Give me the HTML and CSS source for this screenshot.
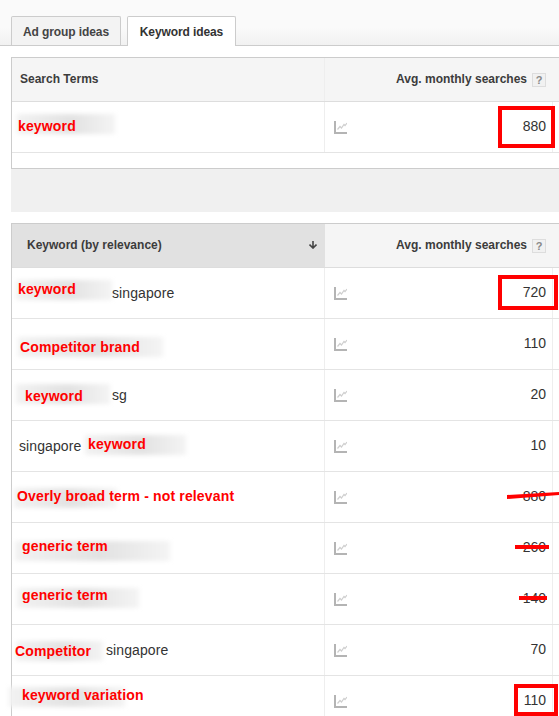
FILE: index.html
```html
<!DOCTYPE html>
<html lang="en">
<head>
    <meta charset="UTF-8">
    <title>Keyword ideas</title>
    <link rel="stylesheet" href="styles.css">
</head>
<body>
    <svg class="defs" width="0" height="0">
        <symbol id="chart" viewBox="0 0 13 13">
            <path d="M1 0V12H13" fill="none" stroke="#b4b4b4" stroke-width="2"/>
            <path d="M3.5 8.5L6 5.5L7.5 7L10 3.5L11 4.5L13 2" fill="none" stroke="#cfcfcf" stroke-width="1.2"/>
        </symbol>
    </svg>
    <div class="tabs">
        <div class="tab">Ad group ideas</div>
        <div class="tab tab-active">Keyword ideas</div>
    </div>
    <div class="panel">
        <div class="table table-terms">
            <div class="row head">
                <div class="cell-name">Search Terms</div>
                <div class="cell-searches">Avg. monthly searches <span class="help">?</span></div>
            </div>
            <div class="row">
                <div class="cell-name">
                    <span class="smudge s-term"></span>
                    <span class="note n-term">keyword</span>
                </div>
                <div class="cell-chart"><svg class="chart"><use href="#chart"/></svg></div>
                <div class="cell-num">880</div>
                <span class="box box-880"></span>
            </div>
        </div>
        <div class="spacer"></div>
        <div class="table">
            <div class="row head">
                <div class="cell-name cell-sorted">Keyword (by relevance)
                    <svg class="arrow" width="8" height="8" viewBox="0 0 8 8"><path d="M4 0V7M.5 3.5L4 7L7.5 3.5" fill="none" stroke="#444" stroke-width="1.6"/></svg>
                </div>
                <div class="cell-searches">Avg. monthly searches <span class="help">?</span></div>
            </div>
            <div class="row">
                <div class="cell-name">
                    <span class="smudge s1"></span>
                    <span class="note n1">keyword</span>
                    <span class="plain p1">singapore</span>
                </div>
                <div class="cell-chart"><svg class="chart"><use href="#chart"/></svg></div>
                <div class="cell-num">720</div>
                <span class="box box-720"></span>
            </div>
            <div class="row">
                <div class="cell-name">
                    <span class="smudge s2"></span>
                    <span class="note n2">Competitor brand</span>
                </div>
                <div class="cell-chart"><svg class="chart"><use href="#chart"/></svg></div>
                <div class="cell-num">110</div>
            </div>
            <div class="row">
                <div class="cell-name">
                    <span class="smudge s3"></span>
                    <span class="note n3">keyword</span>
                    <span class="plain p3">sg</span>
                </div>
                <div class="cell-chart"><svg class="chart"><use href="#chart"/></svg></div>
                <div class="cell-num">20</div>
            </div>
            <div class="row">
                <div class="cell-name">
                    <span class="plain p4">singapore</span>
                    <span class="smudge s4"></span>
                    <span class="note n4">keyword</span>
                </div>
                <div class="cell-chart"><svg class="chart"><use href="#chart"/></svg></div>
                <div class="cell-num">10</div>
            </div>
            <div class="row">
                <div class="cell-name">
                    <span class="smudge s5"></span>
                    <span class="note n5">Overly broad term - not relevant</span>
                </div>
                <div class="cell-chart"><svg class="chart"><use href="#chart"/></svg></div>
                <div class="cell-num">880</div>
                <svg class="strike strike-5" width="52" height="8"><polygon points="0,3 52,0 52,3 0,7" fill="#f00"/></svg>
            </div>
            <div class="row">
                <div class="cell-name">
                    <span class="smudge s6"></span>
                    <span class="note n6">generic term</span>
                </div>
                <div class="cell-chart"><svg class="chart"><use href="#chart"/></svg></div>
                <div class="cell-num">260</div>
                <span class="strike strike-6"></span>
            </div>
            <div class="row">
                <div class="cell-name">
                    <span class="smudge s7"></span>
                    <span class="note n7">generic term</span>
                </div>
                <div class="cell-chart"><svg class="chart"><use href="#chart"/></svg></div>
                <div class="cell-num">140</div>
                <span class="strike strike-7"></span>
            </div>
            <div class="row">
                <div class="cell-name">
                    <span class="smudge s8"></span>
                    <span class="note n8">Competitor</span>
                    <span class="plain p8">singapore</span>
                </div>
                <div class="cell-chart"><svg class="chart"><use href="#chart"/></svg></div>
                <div class="cell-num">70</div>
            </div>
            <div class="row">
                <div class="cell-name">
                    <span class="smudge s9"></span>
                    <span class="note n9">keyword variation</span>
                </div>
                <div class="cell-chart"><svg class="chart"><use href="#chart"/></svg></div>
                <div class="cell-num">110</div>
                <span class="box box-110"></span>
            </div>
        </div>
    </div>
</body>
</html>
```

FILE: styles.css
```css
html, body {
    height: 716px;
    overflow: hidden;
}
body {
    margin: 0;
    background: #fff;
    font-family: "Liberation Sans", Arial, sans-serif;
    font-size: 14px;
    color: #333;
}
.defs {
    display: block;
    height: 0;
}

/* tabs */
.tabs {
    height: 46px;
    box-sizing: border-box;
    padding: 16px 0 0 11px;
    display: flex;
    gap: 6px;
    border-bottom: 1px solid #ccc;
    background: linear-gradient(#fafafa, #fafafa 60%, #f1f1f1);
}
.tab {
    width: 110px;
    height: 29px;
    box-sizing: border-box;
    border: 1px solid #ccc;
    border-bottom: 0;
    border-radius: 2px 2px 0 0;
    background: #f3f3f3;
    text-align: center;
    font-size: 12px;
    font-weight: bold;
    line-height: 31px;
    letter-spacing: -0.1px;
    color: #444;
}
.tab-active {
    width: 109px;
    height: 30px;
    background: #fff;
    color: #333;
}

/* tables */
.panel {
    padding: 11px 0 0 11px;
}
.table {
    border-top: 1px solid #ccc;
    border-left: 1px solid #ccc;
}
.table-terms {
    border-bottom: 1px solid #ccc;
    height: 110px;
}
.spacer {
    height: 43px;
    margin-bottom: 11px;
    background: #f0f0f0;
}
.row {
    position: relative;
    display: flex;
    align-items: stretch;
    height: 50px;
    border-bottom: 1px solid #e4e4e4;
}
.head {
    height: 43px;
    background: #f5f5f5;
    font-size: 12px;
    font-weight: bold;
    color: #3c3c3c;
    border-bottom-color: #ddd;
}
.head .cell-name,
.cell-searches {
    padding-bottom: 2px;
}
.cell-name {
    width: 313px;
    flex: none;
    box-sizing: border-box;
    display: flex;
    align-items: center;
    padding-left: 8px;
    border-right: 1px solid #eee;
}
.head .cell-sorted {
    padding: 0 8px 2px 15px;
    justify-content: space-between;
    background: #e1e1e1;
    border-right: 0;
}
.cell-searches {
    flex: 1;
    display: flex;
    align-items: center;
    justify-content: flex-end;
    gap: 5px;
    padding-right: 13px;
    margin-left: 1px;
}
.help {
    width: 12px;
    height: 12px;
    margin-top: 2px;
    border: 1px solid #ddd;
    background: #f1f1f1;
    color: #888;
    font-size: 11px;
    line-height: 12px;
    text-align: center;
}
.cell-chart {
    width: 62px;
    flex: none;
    display: flex;
    align-items: center;
    padding-left: 9px;
    box-sizing: border-box;
}
.chart {
    width: 13px;
    height: 13px;
}
.cell-num {
    width: 166px;
    flex: none;
    box-sizing: border-box;
    display: flex;
    align-items: center;
    justify-content: flex-end;
    padding: 0 6px 2px 0;
    border-right: 1px solid #eee;
    color: #333;
}

/* pasted-over annotations, offsets are from the row's top left */
.smudge {
    position: absolute;
    height: 20px;
    background: linear-gradient(90deg, #f2f2f2, #e2e2e2 55%, #f4f4f4);
    filter: blur(2px);
}
.note {
    position: absolute;
    color: #f00;
    font-size: 14px;
    font-weight: bold;
    line-height: 16px;
    letter-spacing: 0.15px;
}
.plain {
    position: absolute;
    line-height: 16px;
    letter-spacing: 0.1px;
}
.box {
    position: absolute;
    border: 4px solid #f00;
    box-sizing: border-box;
}
.strike {
    position: absolute;
    background: #f00;
}
svg.strike {
    background: none;
}
.box-880 { left: 486px; top: 4px; width: 57px; height: 42px; }
.box-720 { left: 486px; top: 7px; width: 60px; height: 35px; }
.box-110 { left: 502px; top: 8px; width: 44px; height: 32px; }
.strike-5 { left: 495px; top: 20px; }
.strike-6 { left: 503px; top: 22px; width: 34px; height: 4px; }
.strike-7 { left: 507px; top: 22px; width: 28px; height: 4px; }

.s-term { left: 5px; top: 12px; width: 98px; }
.n-term { left: 6px; top: 16px; }
.s1 { left: 4px; top: 12px; width: 96px; }
.n1 { left: 6px; top: 13px; }
.p1 { left: 100px; top: 17px; }
.s2 { left: 6px; top: 18px; width: 145px; }
.n2 { left: 8px; top: 20px; }
.s3 { left: 4px; top: 14px; width: 94px; }
.n3 { left: 13px; top: 18px; }
.p3 { left: 100px; top: 17px; }
.p4 { left: 7px; top: 17px; }
.s4 { left: 73px; top: 14px; width: 101px; }
.n4 { left: 76px; top: 15px; }
.s5 { left: 2px; top: 16px; width: 103px; }
.n5 { left: 5px; top: 16px; }
.s6 { left: 3px; top: 18px; width: 155px; }
.n6 { left: 10px; top: 15px; }
.s7 { left: 5px; top: 14px; width: 122px; }
.n7 { left: 10px; top: 13px; }
.s8 { left: 4px; top: 16px; width: 87px; }
.n8 { left: 3px; top: 18px; }
.p8 { left: 94px; top: 17px; }
.s9 { left: -3px; top: 11px; width: 116px; }
.n9 { left: 10px; top: 11px; }
```
